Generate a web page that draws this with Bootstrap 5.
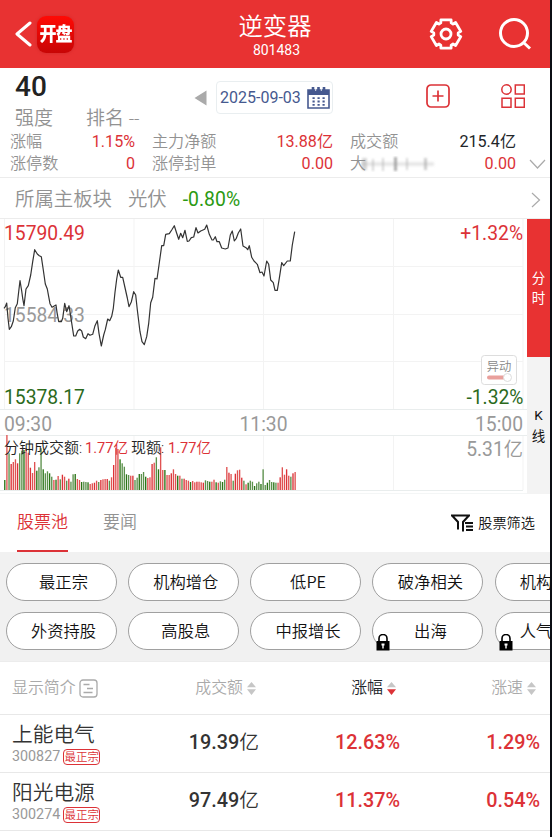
<!DOCTYPE html>
<html lang="zh-CN">
<head>
  <meta charset="UTF-8" />
  <title>逆变器 801483</title>
  <meta name="viewport" content="width=device-width, initial-scale=1" />
  <link href="https://cdn.jsdelivr.net/npm/bootstrap@5.3.3/dist/css/bootstrap.min.css" rel="stylesheet" />
  <style>
    body { font-family: Roboto, "Noto Sans CJK SC", sans-serif; font-weight: 350; background: #0b0e14; color: #333; line-height: 1; overflow: hidden; }
    svg { display: block; flex: none; }
    .app { width: 550px; height: 837px; background: #fff; overflow: hidden; }
    .red { color: #dc3237; }
    .green { color: #2a9a12; }
    .muted { color: #929292; }
    .top-bar { height: 68px; background: #e83232; color: #fff; padding: 0 18px 0 14px; }
    .side-box { width: 170px; }
    .icon-search { margin-left: 35px; }
    .logo { width: 37px; height: 37px; margin-left: 5px; border-radius: 9px; background: linear-gradient(#ff0a05, #c80505); box-shadow: 0 0 3px #b3202080; font-size: 17px; font-weight: 900; letter-spacing: -1px; }
    .logo span { transform: scaleY(1.15); }
    .title { font-size: 24.3px; line-height: 28px; padding: 13px 0 0 4px; }
    .code-top { font-size: 14px; font-weight: 400; line-height: 18px; padding-left: 7px; }
    .summary { height: 110px; border-bottom: 1px solid #ececec; }
    .summary-top { height: 62px; }
    .score-col { width: 193px; padding-left: 15px; }
    .score { font-size: 28px; font-weight: 500; color: #222; height: 38px; line-height: 38px; }
    .score-label { font-size: 19px; line-height: 26px; }
    .score-label span { margin-right: 33px; }
    .prev-day { margin-top: 22px; }
    .icon-add { margin: 16px 0 0 93px; }
    .icon-grid { margin: 16px 0 0 51px; }
    .date-box { width: 117px; height: 33px; margin: 13px 0 0 9px; border: 1px solid #e9eef0; color: #46598f; font-size: 16px; font-weight: 400; padding: 0 2px 0 3px; }
    .stats { display: grid; grid-template-columns: 125px 181px 166px 15px; column-gap: 17px; padding: 1px 0 0 10px; font-size: 16.1px; }
    .stats > div { height: 22px; display: flex; justify-content: space-between; align-items: center; }
    .stats b { font-weight: 400; }
    .stats > .more { justify-content: center; margin-left: -6px; }
    .smudge { margin-left: -5px; }
    .board { height: 41px; padding: 3px 9px 0 15px; font-size: 19.4px; border-bottom: 1px solid #ececec; }
    .board b { font-weight: 400; }
    .mode { width: 23px; font-size: 13.5px; line-height: 20.5px; font-weight: 400; }
    .mode > div { height: 137px; background: #f3f3f3; color: #111; }
    .mode > .on { height: 138px; background: #e83232; color: #fff; }
    .tabs { height: 58px; padding: 0 15px 0 17px; font-size: 17px; }
    .tab-item { height: 58px; line-height: 57px; margin-right: 35px; }
    .tab-item.on { border-bottom: 2px solid #dc3237; }
    .screener { font-size: 14.2px; color: #111; gap: 5px; }
    .pills { height: 109px; background: #f1f1f1; padding: 11px 0 0 5.5px; }
    .pill-row { gap: 11.3px; margin-bottom: 11px; }
    .pill { flex: none; width: 111px; height: 38px; border: 1px solid #a0a0a0; border-radius: 19px; background: #fff; color: #111; font: 350 16.3px "Noto Sans CJK SC", sans-serif; padding: 0 0 2px 5px; }
    .pill.cut { justify-content: flex-start !important; padding-left: 24px; white-space: nowrap; }
    .lock { position: absolute; left: 3px; bottom: -2px; }
    .stock { display: grid; grid-template-columns: 171px 88px 141px 140px; height: 58px; border-bottom: 1px solid #e8e8e8; align-items: center; text-align: right; font-size: 19.8px; font-weight: 500; }
    .stock > div:first-child { text-align: left; padding-left: 12px; }
    .stock > .red, .stock > .amount { padding-bottom: 1px; }
    .stock.head { height: 54px; border-top: 1px solid #ececec; font-size: 15.9px; font-weight: 350; color: #aaa; }
    .head > div { display: flex; align-items: center; justify-content: flex-end; gap: 4px; padding-right: 3px; }
    .head > div:first-child { justify-content: flex-start; gap: 3px; }
    .head > div:nth-child(n+3) { padding-right: 4px; }
    .stock-name { font-size: 20.7px; font-weight: 350; line-height: 26px; }
    .stock-code { font-size: 14.3px; font-weight: 400; color: #999; line-height: 17px; }
    .tag { border: 1px solid #dc3237; border-radius: 4px; color: #dc3237; font-size: 11.5px; font-weight: 350; line-height: 14px; width: 37px; height: 16px; margin-left: 3px; white-space: nowrap; }
    .yi { font-weight: 350; }
  </style>
</head>
<body>
<div class="app">
  <header class="top-bar d-flex align-items-center justify-content-between">
    <div class="side-box d-flex align-items-center">
      <svg width="18" height="26" viewBox="0 0 18 26"><path d="M16 2 3 13l13 11" fill="none" stroke="#fff" stroke-width="3" stroke-linecap="round" stroke-linejoin="round"/></svg>
      <div class="logo d-flex align-items-center justify-content-center"><span>开盘</span></div>
    </div>
    <div class="text-center align-self-start">
      <div class="title">逆变器</div>
      <div class="code-top">801483</div>
    </div>
    <div class="side-box d-flex align-items-center justify-content-end">
      <svg width="34" height="34" viewBox="-17 -17 34 34" fill="none" stroke="#fff" stroke-width="2.800" stroke-linejoin="round"><path id="gear"/><circle r="5"/></svg>
      <svg class="icon-search" width="34" height="34" viewBox="0 0 34 34" fill="none" stroke="#fff" stroke-width="3"><circle cx="16" cy="16" r="13.500"/><path d="m25.500 25.500 6.500 6"/></svg>
    </div>
  </header>

  <!-- 概览 -->
  <section class="summary">
    <div class="summary-top d-flex">
      <div class="score-col muted">
        <div class="score">40</div>
        <div class="score-label"><span>强度</span>排名 --</div>
      </div>
      <svg class="prev-day" width="14" height="16" viewBox="0 0 14 16"><path d="M13.500.5v15L1.500 8z" fill="#aaa"/></svg>
      <div class="date-box rounded-1 d-flex align-items-center justify-content-between">
        <span>2025-09-03</span>
        <svg width="23" height="22" viewBox="0 0 23 22">
          <path d="M1 3h21v18H1z" fill="#fff" stroke="#46598f" stroke-width="1.600"/><path d="M1 3h21v5H1z" fill="#46598f"/>
          <path d="M6 0v5M11.500 0v5M17 0v5" stroke="#46598f" stroke-width="2.600"/><path d="M8.700 1v3M14.300 1v3" stroke="#fff" stroke-width=".8"/>
          <path d="M5.500 11.200h12.500M5.500 14.500h12.500M5.500 17.800h12.500" stroke="#46598f" stroke-width="1.800" stroke-dasharray="2.200 2.800"/>
        </svg>
      </div>
      <svg class="icon-add" width="24" height="24" viewBox="0 0 24 24" fill="none" stroke="#dc3237" stroke-width="1.700"><rect x="1" y="1" width="22" height="22" rx="4"/><path d="M12 6.500v11M6.500 12h11"/></svg>
      <svg class="icon-grid" width="24" height="24" viewBox="0 0 24 24" fill="none" stroke="#dc3237" stroke-width="1.500"><circle cx="5.500" cy="5.500" r="4.700"/><path d="M14.300 1h9v9h-9zM1 14.300h9v9H1zM14.300 14.300h9v9h-9z"/></svg>
    </div>
    <div class="stats muted">
      <div>涨幅<b class="red">1.15%</b></div>
      <div>主力净额<b class="red">13.88亿</b></div>
      <div>成交额<b class="text-dark">215.4亿</b></div>
      <div></div>
      <div>涨停数<b class="red">0</b></div>
      <div>涨停封单<b class="red">0.00</b></div>
      <div>
        <span class="d-flex align-items-center">大
          <svg class="smudge" width="76" height="16" viewBox="0 0 76 16">
            <defs><filter id="soft"><feGaussianBlur stdDeviation=".9"/></filter></defs>
            <g filter="url(#soft)" fill="#999"><path d="M0 6h73v4H0z" opacity=".22"/><path d="M1 2h5v12H1z" opacity=".4"/><path d="M11 3h2v12h-2zM21 2h2v13h-2zM45 2h2v12h-2z" opacity=".4"/><path d="M33 1h3v14h-3z" opacity=".8"/><path d="M63 2h3v12h-3z" opacity=".5"/></g>
          </svg>
        </span>
        <b class="red">0.00</b>
      </div>
      <div class="more"><svg width="17" height="10" viewBox="0 0 17 10"><path d="m1 1 7.500 8L16 1" fill="none" stroke="#aaa" stroke-width="1.200"/></svg></div>
    </div>
  </section>

  <div class="board d-flex align-items-center muted">
    <span>所属主板块</span><span class="ms-3">光伏</span><b class="green ms-3">-0.80%</b>
    <svg class="ms-auto" width="10" height="16" viewBox="0 0 10 16"><path d="m1 1 7.500 7L1 15" fill="none" stroke="#aaa" stroke-width="1.200"/></svg>
  </div>

  <!-- 分时图 -->
  <section class="d-flex">
    <svg width="527" height="275" viewBox="0 0 527 275" font-size="19.300" font-weight="400">
      <path d="M4.500 0v190.500M134 0v190.500M263.500 0v190.500M393.500 0v190.500M523 0v190.500M4 47.500h519M4 95.500h519M4 142.500h519M134 216v55M263.500 216v55M393.500 216v55M523 216v55" fill="none" stroke="#f3f3f3"/>
      <path d="M0 190.500h527M0 216.500h527M0 271.500h523M0 275h527" stroke="#e9eded"/>
      <text x="4" y="21" fill="#dc3237">15790.49</text>
      <text x="4" y="103" fill="#999">15584.33</text>
      <text x="4" y="185" fill="#2b6a1c">15378.17</text>
      <text x="523" y="21" fill="#dc3237" text-anchor="end">+1.32%</text>
      <text x="523.500" y="185" fill="#2b6a1c" text-anchor="end">-1.32%</text>
      <g fill="#999"><text x="4" y="211.500">09:30</text><text x="263.500" y="211.500" text-anchor="middle">11:30</text><text x="523" y="211.500" text-anchor="end">15:00</text><text x="523" y="237" text-anchor="end">5.31<tspan font-weight="350">亿</tspan></text></g>
      <g id="volume"></g>
      <g font-size="14.600" font-weight="350" fill="#222"><text x="4" y="233.500" font-size="15">分钟成交额:</text><text x="85" y="233.500" fill="#dc3237"><tspan font-weight="400">1.77</tspan>亿</text><text x="131" y="233.500" font-size="15">现额:</text><text x="168" y="233.500" fill="#dc3237"><tspan font-weight="400">1.77</tspan>亿</text></g>
      <polyline id="price" fill="none" stroke="#333" stroke-width="1.200" stroke-linejoin="round"/>
      <rect x="481.500" y="136.500" width="35" height="29" rx="3" fill="#fff" stroke="#ddd"/>
      <text x="499" y="151.500" font-size="12.300" font-weight="350" fill="#888" text-anchor="middle">异动</text>
      <rect x="487" y="156.500" width="22" height="4" rx="2" fill="#e9a09c"/><circle cx="507.500" cy="158.500" r="4" fill="#fff" stroke="#ddd"/>
    </svg>
    <div class="mode text-center">
      <div class="on d-flex align-items-center justify-content-center">分<br>时</div>
      <div class="d-flex align-items-center justify-content-center">K<br>线</div>
    </div>
  </section>

  <nav class="tabs d-flex">
    <div class="tab-item on red">股票池</div>
    <div class="tab-item muted">要闻</div>
    <div class="screener d-flex align-items-center ms-auto">
      <svg width="22" height="18" viewBox="0 0 22 18" fill="none" stroke="#111" stroke-width="2"><path d="M0 1.500h19M1.500 2l5.500 6v7.500M17.500 2 12 8v9.500M14 9h8M15 12.500h7M15 16h7"/></svg>
      <span>股票筛选</span>
    </div>
  </nav>

  <section class="pills">
    <div class="pill-row d-flex" id="pills-a"></div>
    <div class="pill-row d-flex" id="pills-b"></div>
  </section>

  <section>
    <div class="stock head">
      <div>显示简介<svg width="19" height="19" viewBox="0 0 19 19" fill="none" stroke="#aaa" stroke-width="1.300"><rect x="1" y="1" width="17" height="17" rx="3"/><path d="M4.500 5.500h6M8 9.500h6M4.500 13.500h9"/></svg></div>
      <div>成交额<svg width="9" height="13" viewBox="0 0 9 13" fill="#c6c6c6"><path d="M4.500 0 9 5.300H0zM4.500 13 9 7.300H0z"/></svg></div>
      <div class="text-dark">涨幅<svg width="9" height="13" viewBox="0 0 9 13" fill="#c6c6c6"><path d="M4.500 0 9 5.300H0z"/><path d="M4.500 13 9 7.300H0z" fill="#dc3237"/></svg></div>
      <div>涨速<svg width="9" height="13" viewBox="0 0 9 13" fill="#c6c6c6"><path d="M4.500 0 9 5.300H0zM4.500 13 9 7.300H0z"/></svg></div>
    </div>
    <div class="stock">
      <div><div class="stock-name">上能电气</div><div class="stock-code d-flex align-items-center">300827<span class="tag d-flex align-items-center justify-content-center">最正宗</span></div></div>
      <div class="amount">19.39<span class="yi">亿</span></div><div class="red">12.63%</div><div class="red">1.29%</div>
    </div>
    <div class="stock">
      <div><div class="stock-name">阳光电源</div><div class="stock-code d-flex align-items-center">300274<span class="tag d-flex align-items-center justify-content-center">最正宗</span></div></div>
      <div class="amount">97.49<span class="yi">亿</span></div><div class="red">11.37%</div><div class="red">0.54%</div>
    </div>
  </section>
</div>

<script src="https://cdn.jsdelivr.net/npm/bootstrap@5.3.3/dist/js/bootstrap.bundle.min.js"></script>
<script>
  // 价格走势，单位为 1/3 像素
  const price = "12,280 16,275 20,264 24,310 28,343 34,335 40,318 46,278 52,266 57,222 60,197 65,228 68,250 72,272 78,222 85,212 92,180 98,140 104,104 112,117 118,122 124,125 130,165 136,207 142,222 146,245 150,266 156,277 168,270 171,292 176,320 184,320 188,310 194,265 200,290 207,272 213,310 221,363 227,363 233,348 239,343 245,348 250,366 257,371 264,356 270,361 278,358 285,332 292,317 297,355 304,393 311,360 316,344 323,312 329,317 335,304 340,280 345,232 350,192 355,165 362,187 368,187 376,222 382,249 387,275 394,261 401,230 407,240 412,284 420,350 426,380 433,389 440,365 446,325 452,263 458,247 465,190 471,192 477,150 485,92 491,92 497,58 508,56 515,45 523,32 530,55 536,73 542,55 548,68 555,46 562,79 567,78 574,68 581,66 588,38 594,54 602,48 614,43 620,30 628,58 636,75 640,75 646,65 651,80 658,80 665,99 676,102 684,99 691,60 697,48 703,78 709,70 715,54 722,42 729,93 738,98 743,104 748,92 755,127 762,138 772,148 780,173 786,171 792,183 800,138 806,148 812,195 820,203 825,226 832,226 838,190 845,143 851,152 862,138 871,138 877,90 884,50";
  document.getElementById("price").setAttribute("points", price.split(" ").map(p => {
    const [x, y] = p.split(",");
    return (x / 3).toFixed(1) + "," + (y / 3 - 4).toFixed(1);
  }).join(" "));

  // 每分钟成交额
  const volume = "g30 r165 g110 r78 r84 r92 r80 g110 g118 g120 r125 r112 r67 r51 r84 g58 g68 g125 g62 g50 g56 g50 g40 r30 g31 r42 g32 r46 r40 g28 r34 g25 g47 g48 r33 r30 g24 g25 g24 g23 r18 r20 r22 r28 g24 r30 r32 r33 r33 g28 r38 r75 r127 r123 g92 g80 g70 g47 g45 r43 r43 g30 g37 g48 g48 g54 g40 r36 r38 r78 r82 g98 g62 r128 r60 g60 r45 r45 r50 r62 r48 g43 r43 g34 r34 r30 r28 g24 r27 r23 r25 r25 r23 r22 g29 g27 g25 r25 r31 g23 r22 g26 g24 g31 r69 r52 r48 g28 r49 r59 r61 r37 g28 r17 g22 g28 g25 g12 g20 g25 g18 g62 g15 g22 g30 g24 g23 g22 r22 r38 r68 r46 r62 r43 g40 r50 r54".split(" ");
  document.getElementById("volume").innerHTML = volume.map((v, i) => {
    const h = v.slice(1) / 3;
    const fill = v[0] === "r" ? (i % 3 ? "#e05252" : "#dc3237") : (i % 3 ? "#5c914c" : "#2a7416");
    return `<rect x="${(4.1 + i * 2.135).toFixed(2)}" y="${(271 - h).toFixed(1)}" width="1.35" height="${h.toFixed(1)}" fill="${fill}"/>`;
  }).join("");

  // 齿轮轮廓
  const teeth = [];
  for (let k = 0; k < 6; k++) {
    [[-20, 15], [20, 15], [25, 12.2], [35, 12.2]].forEach(([a, r]) => {
      const t = (k * 60 + 30 + a) * Math.PI / 180;
      teeth.push((r * Math.cos(t)).toFixed(1) + " " + (r * Math.sin(t)).toFixed(1));
    });
  }
  document.getElementById("gear").setAttribute("d", "M" + teeth.join("L") + "Z");

  const lock = '<svg class="lock" width="14" height="17" viewBox="0 0 14 17"><path d="M3 8V4.500a4 4 0 0 1 8 0V8" fill="none" stroke="#000" stroke-width="1.600"/><path d="M.5 7h13v9.500H.5z"/><path d="M5.500 9.500h3v2h-.8v3H6.300v-3h-.8z" fill="#fff"/></svg>';
  function pills(id, names, lockedFrom) {
    document.getElementById(id).innerHTML = names.map((n, i) =>
      `<div class="pill position-relative d-flex align-items-center justify-content-center${i === 4 ? " cut" : ""}">${n}${i >= lockedFrom ? lock : ""}</div>`).join("");
  }
  pills("pills-a", ["最正宗", "机构增仓", "低PE", "破净相关", "机构"], 9);
  pills("pills-b", ["外资持股", "高股息", "中报增长", "出海", "人气"], 3);
</script>
</body>
</html>
